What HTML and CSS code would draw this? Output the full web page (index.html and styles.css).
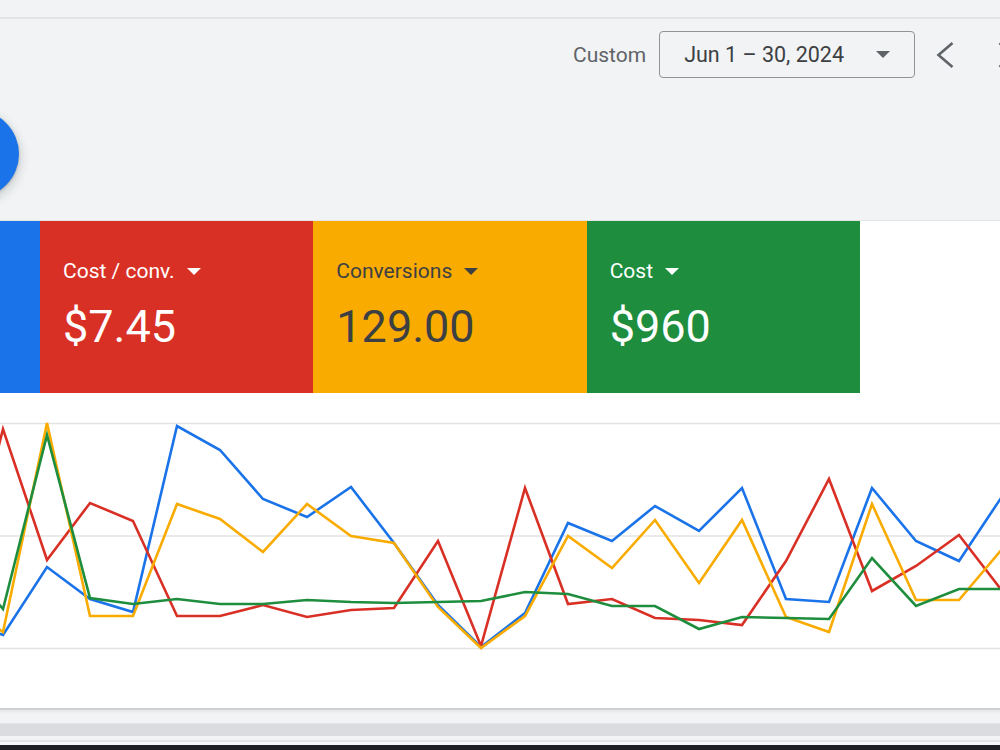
FILE: index.html
```html
<!DOCTYPE html>
<html lang="en">
<head>
<meta charset="utf-8">
<title>Overview</title>
<link rel="stylesheet" href="styles.css">
</head>
<body>
<div class="topbar"></div>
<div class="toolbar">
  <span class="range-label">Custom</span>
  <button class="date-picker">
    <span class="date-text">Jun 1 – 30, 2024</span>
    <svg class="caret" width="14" height="7" viewBox="0 0 14 7"><path d="M0 0h14L7 7z" fill="#5f6368"/></svg>
  </button>
  <svg class="chev chev-left" width="24" height="28" viewBox="0 0 24 28"><polyline points="19.5,2 5.5,14 19.5,26" fill="none" stroke="#5f6368" stroke-width="2.6"/></svg>
  <svg class="chev chev-right" width="24" height="28" viewBox="0 0 24 28"><polyline points="4.5,2 18.5,14 4.5,26" fill="none" stroke="#5f6368" stroke-width="2.6"/></svg>
</div>
<div class="fab-row">
  <div class="fab"></div>
</div>
<div class="panel">
  <div class="cards">
    <div class="card card-blue"></div>
    <div class="card card-red">
      <div class="card-label">Cost / conv. <span class="tri"></span></div>
      <div class="card-value">$7.45</div>
    </div>
    <div class="card card-yellow">
      <div class="card-label">Conversions <span class="tri"></span></div>
      <div class="card-value">129.00</div>
    </div>
    <div class="card card-green">
      <div class="card-label">Cost <span class="tri"></span></div>
      <div class="card-value">$960</div>
    </div>
  </div>
  <svg class="chart" width="1000" height="315" viewBox="0 393 1000 315">
    <g stroke="#e3e3e3" stroke-width="1.5">
      <line x1="0" y1="423.5" x2="1000" y2="423.5"/>
      <line x1="0" y1="536" x2="1000" y2="536"/>
      <line x1="0" y1="648.5" x2="1000" y2="648.5"/>
    </g>
    <g fill="none" stroke-width="2.6" stroke-linejoin="miter">
      <polyline stroke="#1a73e8" points="-40,620 3,635 47,567 90,599 133,612 177,426 220,450 263,499 307,517 351,487 394,543 438,605 481,647 525,613 568,523 612,541 655,506 699,531 742,488 786,599 829,602 872,488 916,541 959,561 1003,495 1046,480"/>
      <polyline stroke="#d93025" points="-40,600 3,429 47,560 90,503 133,521 177,616 220,616 263,605 307,617 351,610 394,608 438,541 481,646 525,488 568,604 612,599 655,618 699,620 742,625 786,561 829,479 872,591 916,566 959,535 1003,592"/>
      <polyline stroke="#f9ab00" points="-40,600 3,632 47,423 90,616 133,616 177,504 220,519 263,552 307,504 351,536 394,543 438,607 481,648 525,616 568,536 612,568 655,520 699,583 742,520 786,617 829,632 872,504 916,600 959,600 1003,548"/>
      <polyline stroke="#1e8e3e" points="-40,560 3,609 47,435 90,598 133,604 177,599 220,604 263,604 307,600 351,602 394,603 438,602 481,601 525,592 568,594 612,606 655,606 699,629 742,617 786,618 829,619 872,558 916,606 959,589 1003,589"/>
    </g>
  </svg>
</div>
<div class="footer">
  <div class="f-gap"></div>
  <div class="f-band"></div>
  <div class="f-gap2"></div>
  <div class="f-line"></div>
  <div class="f-light"></div>
  <div class="f-dark"></div>
</div>
</body>
</html>
```
FILE: styles.css
```css
html, body {
  margin: 0;
  padding: 0;
}
body {
  width: 1000px;
  height: 750px;
  overflow: hidden;
  background: #f1f3f4;
  font-family: Roboto, "Liberation Sans", Arial, sans-serif;
  color: #3c4043;
}
.topbar {
  height: 17px;
  border-bottom: 2px solid #e2e3e5;
}
.toolbar {
  display: flex;
  align-items: center;
  padding: 12px 0 0 573px;
  height: 47px;
  white-space: nowrap;
}
.range-label {
  font-size: 21px;
  color: #5f6368;
  margin-right: 13px;
}
.date-picker {
  flex: none;
  display: flex;
  align-items: center;
  justify-content: space-between;
  box-sizing: border-box;
  width: 256px;
  height: 47px;
  padding: 0 24px 0 24px;
  background: transparent;
  border: 1px solid #8f9499;
  border-radius: 4px;
  font-family: inherit;
  font-size: 21.5px;
  color: #3c4043;
}
.caret {
  display: block;
}
.chev {
  flex: none;
  display: block;
}
.chev-left {
  margin-left: 18px;
}
.chev-right {
  margin-left: 38px;
}
.fab-row {
  box-sizing: border-box;
  height: 142px;
  padding-top: 32px;
}
.fab {
  width: 88px;
  height: 88px;
  border-radius: 50%;
  background: #1a73e8;
  margin-left: -69px;
  box-shadow: 0 1px 3px rgba(60, 64, 67, 0.3), 0 4px 8px 3px rgba(60, 64, 67, 0.15);
}
.panel {
  background: #fff;
  border-top: 1px solid #e3e4e6;
}
.cards {
  display: flex;
  margin-left: -233.33px;
  height: 172px;
}
.card {
  flex: none;
  width: 273.33px;
  box-sizing: border-box;
  padding: 38px 0 0 23px;
  color: #fff;
}
.card-blue { background: #1a73e8; }
.card-red { background: #d93025; }
.card-yellow { background: #f9ab00; color: #3c4043; }
.card-green { background: #1e8e3e; }
.card-label {
  display: flex;
  align-items: center;
  font-size: 21px;
  line-height: 24px;
  height: 24px;
}
.tri {
  display: inline-block;
  width: 0;
  height: 0;
  margin-left: 12px;
  border-left: 7px solid transparent;
  border-right: 7px solid transparent;
  border-top: 7px solid currentColor;
}
.card-value {
  margin-top: 18px;
  font-size: 45px;
  line-height: 52px;
}
.chart {
  display: block;
}
.footer {
  border-top: 2px solid #cfd0d2;
}
.f-gap {
  height: 13px;
  background: linear-gradient(#e6e7e9, #f1f3f4 4px);
}
.f-band {
  height: 12px;
  background: #dadce0;
  border-top: 1px solid #e3e4e6;
}
.f-gap2 {
  height: 4px;
  background: #f1f3f4;
}
.f-line {
  height: 2px;
  background: #e4e5e7;
}
.f-light {
  height: 3px;
  background: #f6f7f8;
}
.f-dark {
  height: 10px;
  background: #202124;
}
```
